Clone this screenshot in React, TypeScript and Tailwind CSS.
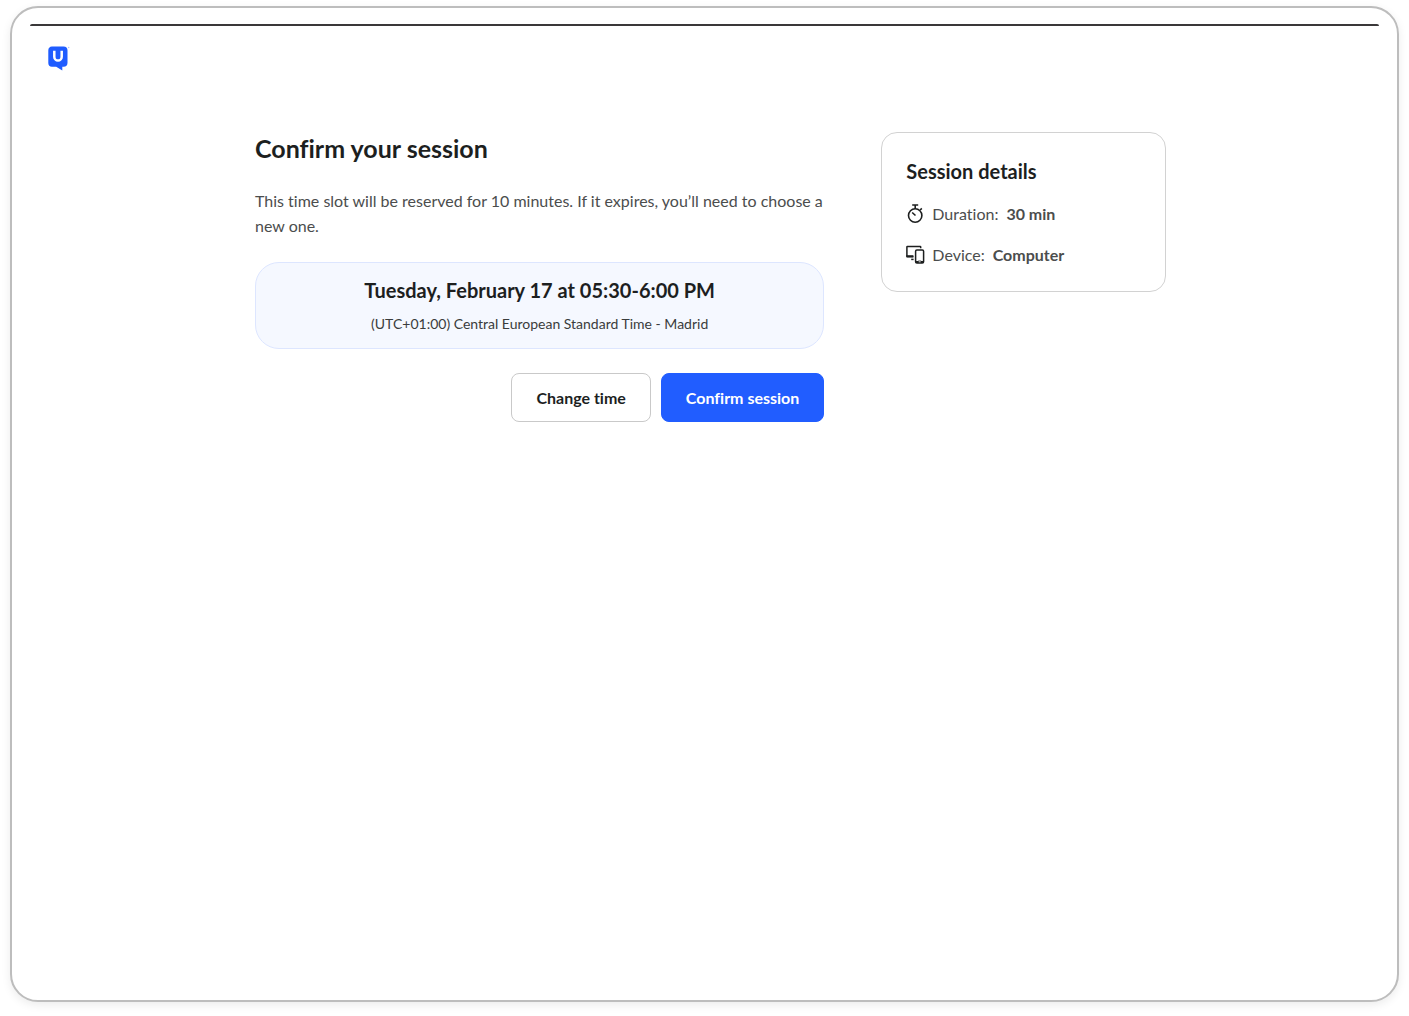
function Logo() {
  return (
    <svg viewBox="0 0 22 26" className="h-[26px] w-[22px]" role="img" aria-label="Home">
      <path
        d="M4 .5h11.500a4 4 0 0 1 4 4v12.200a4 4 0 0 1-4 4h-1.200v3.900L8.200 20.700H4a3.700 3.700 0 0 1-3.700-3.700V4.500A4 4 0 0 1 4 .5Z"
        fill="#1f5cff"
      />
      <path d="M6.300 4.700v6a3.700 3.900 0 0 0 7.400 0v-6" fill="none" stroke="#fff" strokeWidth="2.500" />
      <circle cx="20.700" cy="1.500" r=".7" fill="#a9c0ff" />
    </svg>
  );
}

function StopwatchIcon() {
  return (
    <svg viewBox="0 0 20 20" className="size-5" fill="none" stroke="#1d1f1f" strokeWidth="1.600" aria-hidden="true">
      <circle cx="9.200" cy="11.500" r="6.700" />
      <path d="M6.200 1h6M9.200 1v3.800M14.200 6l1.600-1.600M6.200 8.500l3.300 3" />
    </svg>
  );
}

function DevicesIcon() {
  return (
    <svg viewBox="0 0 20 20" className="size-5" fill="none" stroke="#1d1f1f" aria-hidden="true">
      <path d="M7.400 11.800H1.400a.5.5 0 0 1-.5-.5V1.900a.5.5 0 0 1 .5-.5h12.800a.5.5 0 0 1 .5.5v1.300" strokeWidth="1.500" />
      <path d="M.4 11.200h7" strokeWidth="2" />
      <path d="M5.200 14.400h2.400" strokeWidth="1.500" />
      <rect x="9.600" y="5" width="8" height="13" rx="1.300" strokeWidth="1.500" />
      <path d="M9.700 17h3m2 0h3" strokeWidth="2" />
      <path d="M12.200 16h3" strokeWidth=".8" />
    </svg>
  );
}

export default function App() {
  return (
    <div className="flex min-h-screen flex-col bg-white px-2.5 pt-1.5 pb-3.5 font-['Lato',sans-serif] text-[#4b4d4d] [font-variant-ligatures:none]">
      <div className="flex grow flex-col rounded-[28px] border-2 border-[#bdbdbd] bg-white pt-4 shadow-[0_3px_10px_rgba(0,0,0,0.08)]">
        <div className="mx-[18px] h-0.5 rounded-t-full bg-[#3a3839]" />
        <header className="px-9 pt-5">
          <a href="#" className="block w-fit">
            <Logo />
          </a>
        </header>
        <main className="mx-auto grid w-full max-w-[923px] grid-cols-[2fr_1fr] items-start gap-[57px] pt-[60px] pl-3">
          <section>
            <h1 className="text-[25px] leading-8 font-bold text-[#1d1f1f]">Confirm your session</h1>
            <p className="mt-6 text-base leading-[25px]">
              This time slot will be reserved for 10 minutes. If it expires, you’ll need to choose a new one.
            </p>
            <div className="mt-6 rounded-3xl border border-[#dde6ff] bg-[#f5f8ff] px-6 pt-[13px] pb-3 text-center">
              <h2 className="text-xl leading-7 font-bold text-[#1d1f1f]">Tuesday, February 17 at 05:30-6:00 PM</h2>
              <p className="mt-2 text-sm leading-6 text-[#3a3c3c]">(UTC+01:00) Central European Standard Time - Madrid</p>
            </div>
            <div className="mt-6 flex justify-end gap-2.5">
              <button
                type="button"
                className="h-[49px] rounded-lg border border-[#c9c9c9] bg-white px-6 text-base font-bold text-[#1d1f1f]"
              >
                Change time
              </button>
              <button
                type="button"
                className="h-[49px] rounded-lg border border-[#215dff] bg-[#215dff] px-6 text-base font-bold text-white"
              >
                Confirm session
              </button>
            </div>
          </section>
          <aside className="rounded-2xl border border-[#d2d2d2] p-6">
            <h2 className="text-xl leading-7 font-bold text-[#1d1f1f]">Session details</h2>
            <ul className="mt-4 flex flex-col gap-4">
              <li className="flex items-center gap-1.5 text-base leading-[25px]">
                <StopwatchIcon />
                <span>Duration:</span>
                <strong className="ml-0.5 font-bold">30 min</strong>
              </li>
              <li className="flex items-center gap-1.5 text-base leading-[25px]">
                <DevicesIcon />
                <span>Device:</span>
                <strong className="ml-0.5 font-bold">Computer</strong>
              </li>
            </ul>
          </aside>
        </main>
      </div>
    </div>
  );
}
